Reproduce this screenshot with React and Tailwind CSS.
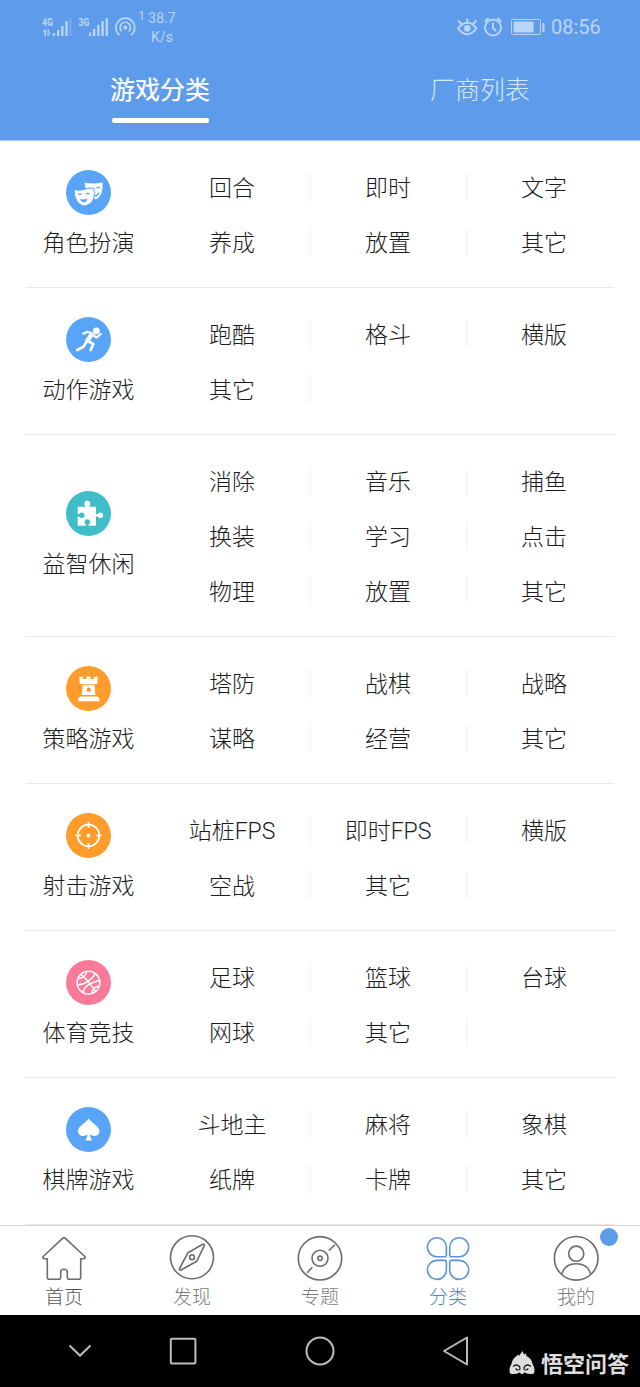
import React, { useState } from 'react';

const MaskIcon = () => (
  <svg viewBox="0 0 45 45" className="size-[45px]">
    <path d="M18.500 12.600q8.500 1.800 18 0q1.400 12.400-6.500 17q-10.500-5-11.500-17z" fill="#fff" />
    <path d="M30.500 18.200q2-1.300 3.500-.3M29 26q3-.5 4-3.500" stroke="#58a4f8" strokeWidth="1.300" fill="none" />
    <path d="M8 19.300q3.500 1.700 8.500.5q6-2.300 11.300-1.600q2.200 12-4.500 15.900q-2.500 1.900-5.500 2q-9.500-2.500-9.800-16.800z" fill="#fff" stroke="#58a4f8" strokeWidth="1" />
    <path d="M12 24.500q1.800-1 3.600-.1M19.800 24q1.800-1 3.600-.1" stroke="#58a4f8" strokeWidth="1.200" fill="none" />
    <path d="M14 29q4 1 7.500-.5q-.7 3.500-3.500 3.800q-2.800-.1-4-3.300z" fill="#58a4f8" />
  </svg>
);

const RunIcon = () => (
  <svg viewBox="0 0 45 45" className="size-[45px]" fill="none" stroke="#fff" strokeLinecap="round" strokeLinejoin="round">
    <circle cx="30.300" cy="13.900" r="3.400" fill="#fff" stroke="none" />
    <path d="M17.300 16.700L21.500 14.700L26 16.200M27 18L30.700 20.500L34.800 17" strokeWidth="2.200" />
    <path d="M25.500 17.800L21.500 23.500" strokeWidth="4.600" />
    <path d="M21.500 24L27.300 27L24.700 33M20 25.500L17.500 29.800L11.200 33" strokeWidth="2.700" />
  </svg>
);

const PuzzleIcon = () => (
  <svg viewBox="0 0 45 45" className="size-[45px]">
    <path d="M11.700 15.700H30V34.700H11.700z" fill="#fff" />
    <circle cx="21.300" cy="12.700" r="2.900" fill="#fff" />
    <path d="M20.200 14h2.200v3h-2.200zM29 23.200h4v2.200h-4z" fill="#fff" />
    <circle cx="34.300" cy="24.300" r="2.800" fill="#fff" />
    <g fill="#3fbdc8">
      <circle cx="15.800" cy="24.300" r="2.700" />
      <path d="M11 23.100h4v2.400h-4zM20.100 32h2.400v3h-2.400z" />
      <circle cx="21.300" cy="31" r="2.700" />
    </g>
  </svg>
);

const RookIcon = () => (
  <svg viewBox="0 0 45 45" className="size-[45px]">
    <path d="M13.500 10.500l3.600.5v2h3.200v-2.500h4.400v2.500h3.200v-2l3.600-.5v6q0 1.800-2 1.800H15.500q-2 0-2-1.800z" fill="#fff" />
    <path d="M16.600 19.200H28.600l.8 9.800H15.800z" fill="#fff" />
    <path d="M14.500 30.500h16.500q2.500.7 2.500 4.800H12q0-4.100 2.500-4.800z" fill="#fff" />
    <path d="M21 25.500v-2.300a1.800 1.800 0 0 1 3.600 0v2.300z" fill="#f0922c" />
  </svg>
);

const TargetIcon = () => (
  <svg viewBox="0 0 45 45" className="size-[45px]" fill="none" stroke="#fff" strokeWidth="1.700">
    <circle cx="22.500" cy="22.500" r="10.800" />
    <path d="M22.500 9v6M22.500 30v6M9 22.500h6M30 22.500h6" />
    <circle cx="22.500" cy="22.500" r="1.900" fill="#fff" stroke="none" />
  </svg>
);

const BallIcon = () => (
  <svg viewBox="0 0 45 45" className="size-[45px]" fill="none" stroke="#fff" strokeWidth="1.500">
    <circle cx="22.500" cy="22.700" r="11.400" />
    <path d="M15 14.500Q23 21 29.500 31.500M11.500 25Q22 24.500 29.500 13.800M12.500 18.500Q19 18.500 20.500 11.700M17 32.500Q18.500 24 33.500 20.500M26 33.500Q25.500 28 33 26" />
  </svg>
);

const SpadeIcon = () => (
  <svg viewBox="0 0 45 45" className="size-[45px]" fill="#fff">
    <path d="M22.700 11.500C25 15.500 33.500 19 33.500 24.200C33.500 28.800 27.500 30.500 23.800 27.300C24.200 30.500 25 32.300 26.300 33.600H19.100C20.400 32.300 21.200 30.500 21.600 27.300C17.900 30.500 11.900 28.800 11.900 24.200C11.900 19 20.400 15.500 22.700 11.500z" />
  </svg>
);

const categories = [
  { name: '角色扮演', color: 'bg-[#58a4f8]', Icon: MaskIcon, items: ['回合', '即时', '文字', '养成', '放置', '其它'] },
  { name: '动作游戏', color: 'bg-[#58a4f8]', Icon: RunIcon, items: ['跑酷', '格斗', '横版', '其它'] },
  { name: '益智休闲', color: 'bg-[#3fbdc8]', Icon: PuzzleIcon, items: ['消除', '音乐', '捕鱼', '换装', '学习', '点击', '物理', '放置', '其它'] },
  { name: '策略游戏', color: 'bg-[#ff9c2c]', Icon: RookIcon, items: ['塔防', '战棋', '战略', '谋略', '经营', '其它'] },
  { name: '射击游戏', color: 'bg-[#ff9c2c]', Icon: TargetIcon, items: ['站桩FPS', '即时FPS', '横版', '空战', '其它'] },
  { name: '体育竞技', color: 'bg-[#fb7a9a]', Icon: BallIcon, items: ['足球', '篮球', '台球', '网球', '其它'] },
  { name: '棋牌游戏', color: 'bg-[#58a4f8]', Icon: SpadeIcon, items: ['斗地主', '麻将', '象棋', '纸牌', '卡牌', '其它'] },
];

const tabs = [
  {
    label: '首页',
    text: 'text-[#555]',
    icon: <path d="M21.600 3.300q1.400-1.200 2.800 0L43.800 21.500q1 1.700-.8 2.200H39.700V42.300q0 2-2 2H28.300q-2 0-2-2V37.500a3.300 3.300 0 0 0-6.600 0V42.300q0 2-2 2H8.300q-2 0-2-2V23.700H3q-1.800-.5-.8-2.200z" />,
  },
  {
    label: '发现',
    text: 'text-[#7c7c7c]',
    icon: (
      <>
        <circle cx="23" cy="22.300" r="21.500" />
        <path d="M19 17.700L33.700 9.300q2-.5 1.500 1.500L27.700 26.300L12 35q-2 .5-1.500-1.500z" />
        <circle cx="23" cy="22.200" r="2.400" />
      </>
    ),
  },
  {
    label: '专题',
    text: 'text-[#7c7c7c]',
    icon: (
      <>
        <circle cx="23" cy="23.300" r="21.700" />
        <circle cx="23" cy="23.300" r="8" />
        <circle cx="23" cy="23.300" r="2.200" />
        <path d="M31.800 15.500L38 9.800M15.300 32.300L10 38" />
      </>
    ),
  },
  {
    label: '分类',
    text: 'text-[#4a88cc]',
    icon: (
      <>
        <path d="M21.400 12.300V19.700q0 2-2 2H11.800a9.500 9.500 0 1 1 9.600-9.400z" />
        <path d="M24.700 12.300V19.700q0 2 2 2H34.300a9.500 9.500 0 1 0-9.600-9.400z" />
        <path d="M21.400 34.900V27.400q0-2-2-2H11.800a9.500 9.500 0 1 0 9.600 9.500z" />
        <path d="M24.700 34.900V27.400q0-2 2-2H34.300a9.500 9.500 0 1 1-9.600 9.500z" />
      </>
    ),
  },
  {
    label: '我的',
    text: 'text-[#7c7c7c]',
    dot: true,
    icon: (
      <>
        <circle cx="23.200" cy="23.300" r="21.800" />
        <circle cx="23.200" cy="18.700" r="7.600" />
        <path d="M9 38.800Q11.500 28.700 23.200 28.700T37.500 38.800" />
      </>
    ),
  },
];

function StatusBar() {
  return (
    <div className="flex h-[54px] justify-between pl-[42px] pr-[39px] font-normal text-[#b9d6f7] font-['Roboto',sans-serif]">
      <div className="flex">
        <svg viewBox="42 0 94 54" className="h-[54px] w-[94px]" fill="currentColor">
          <text x="42" y="25.800" fontSize="10.500" fontWeight="700" textLength="11" lengthAdjust="spacingAndGlyphs">4G</text>
          <text x="78.500" y="25.800" fontSize="10.500" fontWeight="700" textLength="11" lengthAdjust="spacingAndGlyphs">3G</text>
          <path d="M44.500 29.500h1.500v6.500h-1.500zM42.500 32.200l2.500-2.700v2.700zM47.500 29.500H49v6.500h-1.500zM48.500 35.500l2.500-3h-2.500z" />
          <path d="M53 33h2v3h-2zM57 30h2.300v6H57zM61.200 26h2.300v10h-2.300zM65.400 21h2.300v15h-2.300zM89 32.500h2.200V36H89zM93 29h2.300v7H93zM97.200 25h2.300v11h-2.300zM101.400 21h2.300v15h-2.300zM105.600 18h2.300v18h-2.300z" />
          <path d="M69.600 18h1.900v18h-1.900z" opacity=".3" />
          <circle cx="125.300" cy="27.500" r="2" />
          <path d="M119.500 35a9.400 9.400 0 1 1 11.600 0M121.800 31.300a5.200 5.200 0 1 1 7 0" fill="none" stroke="currentColor" strokeWidth="1.700" />
        </svg>
        <span className="mt-2 ml-0.5 w-[10px] text-[13px] leading-4">1</span>
        <div className="mt-[9px] w-[28px] text-center text-[14px] leading-[19px]">
          <div>38.7</div>
          <div>K/s</div>
        </div>
      </div>
      <div className="flex items-center">
        <svg viewBox="456 0 90 54" className="h-[54px] w-[90px]" fill="none" stroke="currentColor" strokeWidth="1.900">
          <path d="M458 28.300q9.500-11 18.500 0q-9 12-18.500 0zM467.300 22.500v-4M461.500 24l-3.500-3.700M473 24l3.500-3.700" />
          <circle cx="467.300" cy="28.300" r="3.400" fill="currentColor" stroke="none" />
          <circle cx="493" cy="27.500" r="8" />
          <path d="M493 22.500v5.500l3 3M484.700 21.500l4-3.500M501.300 21.500l-4-3.500" />
          <rect x="511.500" y="19.500" width="29" height="15" rx="1" strokeWidth="1" />
          <path d="M513.500 21.500h20v11h-20z" fill="currentColor" stroke="none" />
          <path d="M543.500 23v9" strokeWidth="2" />
        </svg>
        <span className="ml-[5px] w-[50px] text-[20px] leading-none">08:56</span>
      </div>
    </div>
  );
}

function CategoryRow({ name, color, Icon, items }) {
  return (
    <section className="mx-[26px] flex shrink-0 items-center border-b border-[#eaeaea] pt-[19px] pb-[17px]">
      <div className="flex w-[125px] shrink-0 flex-col items-center">
        <div className={`size-[45px] rounded-full ${color}`}>
          <Icon />
        </div>
        <span className="mt-2 h-[38px] leading-[41px]">{name}</span>
      </div>
      <div className="-mr-2 ml-[3px] grid w-[468px] shrink-0 grid-cols-3">
        {items.map((item, i) => (
          <div key={i} className="flex h-[55px] items-center pb-[2px]">
            <span className="flex-1 pt-[5px] text-center">{item}</span>
            {i % 3 !== 2 && <span className="-mr-px h-7 w-px bg-[#f0f0f0]" />}
          </div>
        ))}
      </div>
    </section>
  );
}

function App() {
  const [active, setActive] = useState(0);

  return (
    <div className="flex h-[1387px] w-[640px] flex-col overflow-hidden bg-white font-['Roboto','Noto_Sans_CJK_SC',sans-serif] text-[23px] font-light text-[#1c1c1c]">
      <header className="h-[141px] shrink-0 border-b border-[#a9cbf5] bg-[#5e9bea]">
        <StatusBar />
        <div className="flex text-[25px]">
          {['游戏分类', '厂商列表'].map((title, i) => (
            <button key={title} onClick={() => setActive(i)} className="flex flex-1 flex-col items-center">
              <span className={i === active ? 'h-16 leading-[73px] font-normal text-white [-webkit-text-stroke:0.2px_white]' : 'h-16 leading-[73px] text-[#d3e9fc]'}>{title}</span>
              {i === active && <span className="h-[5px] w-[97px] rounded-xs bg-white" />}
            </button>
          ))}
        </div>
      </header>

      <main className="flex h-[1084px] shrink-0 flex-col overflow-hidden">
        {categories.map((c) => (
          <CategoryRow key={c.name} {...c} />
        ))}
      </main>

      <nav className="flex h-[90px] shrink-0 border-t border-[#d5d5d5] bg-white text-[19px]">
        {tabs.map((t) => (
          <button key={t.label} className={`relative flex flex-1 flex-col items-center pt-[9px] ${t.text}`}>
            <svg
              viewBox="0 0 46 46"
              className={t.label === '分类' ? 'size-[46px] text-[#5a94d2]' : 'size-[46px] text-[#6c6c6c]'}
              fill="none"
              stroke="currentColor"
              strokeWidth="1.600"
              strokeLinejoin="round"
            >
              {t.icon}
            </svg>
            <span className="mt-[5px] leading-6">{t.label}</span>
            {t.dot && <span className="absolute top-[2px] right-[22px] size-[18px] rounded-full bg-[#5e9bea]" />}
          </button>
        ))}
      </nav>

      <footer className="flex h-[72px] shrink-0 items-center bg-black text-[#bdbdbd]">
        <svg viewBox="0 0 24 30" className="ml-[68px] h-[30px] w-6" fill="none" stroke="currentColor" strokeWidth="2">
          <path d="M1.500 9.500L12 19.500L22.500 9.500" />
        </svg>
        <svg viewBox="0 0 30 30" className="ml-[76px] size-[30px]" fill="none" stroke="currentColor" strokeWidth="2">
          <rect x="2.800" y="2.800" width="24.600" height="24.600" rx="1" />
        </svg>
        <svg viewBox="0 0 30 30" className="ml-[107px] size-[30px]" fill="none" stroke="currentColor" strokeWidth="2">
          <circle cx="15" cy="15" r="13.500" />
        </svg>
        <svg viewBox="0 0 30 30" className="ml-[105px] size-[30px]" fill="none" stroke="currentColor" strokeWidth="2" strokeLinejoin="round">
          <path d="M4 15L27 1.500V28.500z" />
        </svg>
        <div className="mt-[24px] ml-[39px] flex items-center text-[#dedede]">
          <svg viewBox="0 0 27 26" className="h-[26px] w-[27px]">
            <path d="M1 23.500C0 20 .5 17 2.500 14C3 9.500 6.500 6.500 9.500 4.500L10 6L13.500 1L15 4.500L17 3.500L17.500 6C21 7.500 23 10.500 23.500 14C25.500 17 26 20 25 23.500Q20 25 15.500 22.500L13 24.500L10.500 22.500Q6 25 1 23.500z" fill="currentColor" />
            <path d="M4 16.500q3.500-3 6.500 0q1.500 3.500-1.500 3.500q-2 0-2-1.700M22 16.500q-3.500-3-6.500 0q-1.500 3.500 1.500 3.500q2 0 2-1.700" fill="none" stroke="#111" strokeWidth="1.200" />
          </svg>
          <span className="ml-[5px] pt-1 text-[22px] leading-[26px] font-bold">悟空问答</span>
        </div>
      </footer>
    </div>
  );
}

export default App;
